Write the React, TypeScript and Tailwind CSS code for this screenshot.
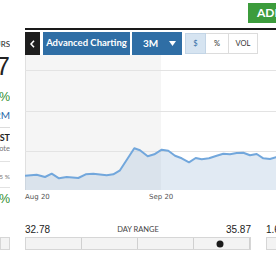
import type { ReactNode } from 'react';

// Cropped quote panel: clipped stats column on the left, chart toolbar,
// 3M price chart and the day-range bar below it.

const points: [number, number][] = [
  [0, 120.7], [11.7, 119.7], [20, 122], [26.7, 118.7], [34, 123.3], [41.7, 122],
  [53.3, 123], [60.7, 119.3], [68.3, 118.7], [81.7, 120.3], [88.3, 119.3], [95, 115.3],
  [109.3, 93.3], [115, 95.3], [122.7, 101.3], [129.3, 99.3], [136.7, 94.7], [143.3, 95.7],
  [150, 100.7], [156.7, 103.3], [164, 107.3], [170.7, 103], [176.7, 104.3], [184, 103.3],
  [191.7, 100.7], [198.3, 98.7], [205, 99.3], [211.7, 98], [218.3, 97.7], [225, 100.3],
  [231.7, 99], [238.3, 103.3], [245, 104], [251, 102.3], [260, 101.5],
];

function PriceChart() {
  const line = points.map(([x, y], i) => `${i ? 'L' : 'M'}${x} ${y}`).join(' ');
  const area = `${line} L260 135 L0 135 Z`;
  return (
    <svg width={260} height={135} viewBox="0 0 260 135" className="block">
      <rect x={0} y={0} width={136} height={135} fill="#f5f5f5" />
      <line x1={0.5} y1={0} x2={0.5} y2={135} stroke="#e0e0e0" />
      {[15.5, 56.5, 96.5].map((y) => (
        <line key={y} x1={0} x2={260} y1={y} y2={y} stroke="#e3e3e3" />
      ))}
      <path d={area} fill="#a8c4de" fillOpacity={0.35} />
      <path d={line} fill="none" stroke="#72a7dc" strokeWidth={2} strokeLinejoin="round" />
    </svg>
  );
}

function Clip({ className, children }: { className: string; children: ReactNode }) {
  return <div className={`flex justify-end whitespace-nowrap ${className}`}>{children}</div>;
}

function RangeBar({ dot }: { dot?: number }) {
  return (
    <div className="relative grid h-[13px] grid-cols-4 divide-x divide-[#d0d0d0] border border-[#d6d6d6] bg-[#f3f3f3]">
      <div />
      <div />
      <div />
      <div />
      {dot !== undefined && (
        <span
          className="absolute top-1/2 h-[7px] w-[7px] -translate-x-1/2 -translate-y-1/2 rounded-full bg-[#1b1b1b]"
          style={{ left: dot }}
        />
      )}
    </div>
  );
}

export default function App() {
  return (
    <div className="flex h-[260px] w-[276px] overflow-hidden bg-white font-['Lato',sans-serif] text-[#222]">
      {/* left stats column, mostly cut off */}
      <div className="flex w-[10px] shrink-0 flex-col overflow-hidden">
        <Clip className="mt-[37px] h-[14px] text-[8px] leading-[14px]">HOURS</Clip>
        <Clip className="mt-[2px] h-[26px] font-['Liberation_Sans',sans-serif] text-[25px] leading-[26px]">
          34.37
        </Clip>
        <Clip className="mt-[11px] h-[14px] font-['Liberation_Sans',sans-serif] text-[12.5px] leading-[14px] text-[#2f8f2f]">
          +1.12%
        </Clip>
        <Clip className="mt-[4px] h-[14px] text-[10px] leading-[14px] text-[#1f69a8]">1.2M</Clip>
        <div className="mt-[5px] h-px bg-[#dcdcdc]" />
        <Clip className="mt-[4px] h-[12px] text-[9px] font-bold leading-[12px]">4:00 PM EST</Clip>
        <Clip className="h-[9px] text-[7.5px] leading-[9px] text-[#777]">Delayed quote</Clip>
        <div className="mt-[8px] h-px bg-[#e2e2e2]" />
        <Clip className="mt-[10px] h-[10px] text-[6.5px] leading-[10px] text-[#777]">2.15 %</Clip>
        <div className="mt-[5px] h-px bg-[#e2e2e2]" />
        <Clip className="mt-[4px] h-[14px] font-['Liberation_Sans',sans-serif] text-[12.5px] leading-[14px] text-[#2f8f2f]">
          +0.45%
        </Clip>
        <div className="mt-[31px] h-[13px] border border-[#d6d6d6] bg-[#f3f3f3]" />
      </div>

      {/* main panel */}
      <div className="ml-[15px] flex w-[260px] shrink-0 flex-col">
        <div className="flex h-[28px] pl-[223px] pt-[3px]">
          <div className="flex h-[20px] items-center whitespace-nowrap bg-[#3c9c3c] pl-[9px] pr-[8px] text-[12px] font-bold text-white">
            ADD TO WATCHLIST
          </div>
        </div>
        <div className="h-[2px] bg-[#1a1a1a]" />

        {/* toolbar */}
        <div className="mt-[2px] flex h-[23px] items-stretch">
          <div className="flex w-[15px] items-center justify-center bg-[#1e1e1e]">
            <svg width="5" height="8" viewBox="0 0 5 8">
              <path d="M4 0.8 L1 4 L4 7.2" fill="none" stroke="#fff" strokeWidth="1.6" />
            </svg>
          </div>
          <div className="ml-[3px] flex w-[87px] items-center justify-center whitespace-nowrap bg-[#2f6ea5] text-[9.5px] font-bold text-white">
            Advanced Charting
          </div>
          <div className="ml-[2px] flex w-[50px] items-center bg-[#2f6ea5] pl-[11px] text-[10px] font-bold text-white">
            3M
            <svg className="ml-[11px]" width="7" height="5" viewBox="0 0 7 5">
              <path d="M0 0 H7 L3.5 5 Z" fill="#fff" />
            </svg>
          </div>
          <div className="ml-[3px] flex self-center">
            <div className="flex h-[21px] w-[21px] items-center justify-center border border-[#c3d5e6] bg-[#d6e4f1] text-[7.5px] text-[#2f6ea5]">
              $
            </div>
            <div className="flex h-[21px] w-[23px] items-center justify-center border border-l-0 border-[#dcdcdc] text-[7.5px] text-[#333]">
              %
            </div>
            <div className="flex h-[21px] w-[29px] items-center justify-center border border-l-0 border-[#dcdcdc] text-[7.5px] text-[#333]">
              VOL
            </div>
          </div>
        </div>

        <PriceChart />

        <div className="mt-[2px] flex h-[10px] font-['DejaVu_Sans',sans-serif] text-[7px] leading-[10px] text-[#555]">
          <span className="w-[124px]">Aug 20</span>
          <span>Sep 20</span>
        </div>

        {/* day range */}
        <div className="mt-[21px] flex">
          <div className="flex w-[226px] shrink-0 flex-col">
            <div className="flex h-[13px] items-end justify-between leading-[13px]">
              <span className="font-['Liberation_Sans',sans-serif] text-[10px]">32.78</span>
              <span className="text-[7.5px] text-[#444]">DAY RANGE</span>
              <span className="font-['Liberation_Sans',sans-serif] text-[10px]">35.87</span>
            </div>
            <div className="mt-[1px]">
              <RangeBar dot={194} />
            </div>
          </div>
          <div className="ml-[15px] flex w-[226px] shrink-0 flex-col">
            <div className="flex h-[13px] items-end leading-[13px]">
              <span className="font-['Liberation_Sans',sans-serif] text-[10px]">1.65</span>
            </div>
            <div className="mt-[1px]">
              <RangeBar />
            </div>
          </div>
        </div>
      </div>
    </div>
  );
}
